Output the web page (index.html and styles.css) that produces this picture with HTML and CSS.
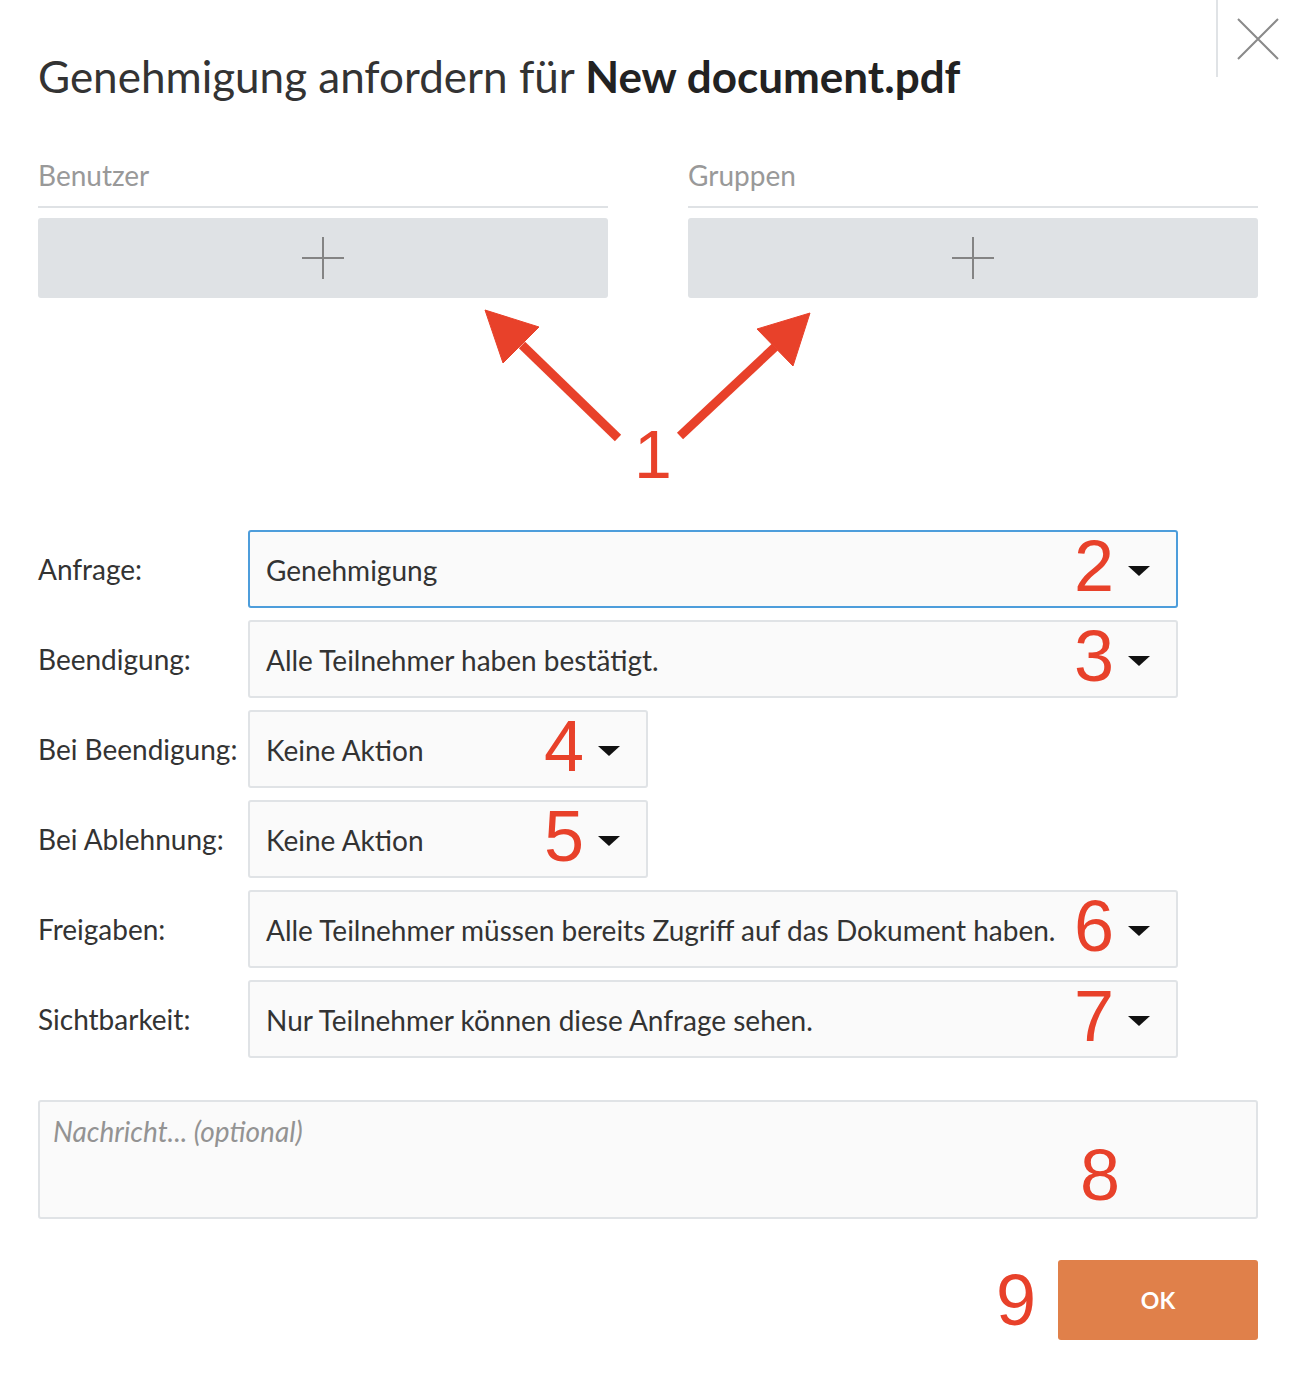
FILE: index.html
```html
<!DOCTYPE html>
<html lang="de">
<head>
  <meta charset="UTF-8">
  <meta name="viewport" content="width=device-width, initial-scale=1.0">
  <title>Genehmigung anfordern</title>
  <link rel="stylesheet" href="styles.css">
</head>
<body>

  <div class="dialog">
    <div class="header">
      <h1>Genehmigung anfordern für <b>New document.pdf</b></h1>
      <button class="close" title="Schließen">
        <svg width="44" height="44" viewBox="0 0 44 44"><path d="M2 2L42 42M42 2L2 42" stroke="#8a8a8a" stroke-width="2" fill="none"/></svg>
      </button>
    </div>

    <div class="body">
      <div class="pickers">
        <div class="picker">
          <div class="picker-title">Benutzer</div>
          <button class="add-btn"><span class="plus"></span></button>
        </div>
        <div class="picker">
          <div class="picker-title">Gruppen</div>
          <button class="add-btn"><span class="plus"></span></button>
        </div>
      </div>

      <!-- callout arrows pointing at both add buttons -->
      <div class="callout">
        <svg class="arrows" viewBox="38 298 1220 232" width="1220" height="232">
          <g fill="#e8412a" stroke="#e8412a">
            <line x1="522" y1="345" x2="618" y2="438" stroke-width="9"/>
            <polygon points="485,310 539,327 503,363" stroke-width="1"/>
            <line x1="775" y1="347" x2="680" y2="436" stroke-width="9"/>
            <polygon points="810,313 757,329 793,366" stroke-width="1"/>
          </g>
        </svg>
        <span class="mark mark-one">1</span>
      </div>

      <div class="form">
        <div class="row">
          <label>Anfrage:</label>
          <div class="select wide focused"><span class="value">Genehmigung</span><span class="mark">2</span><span class="caret"></span></div>
        </div>
        <div class="row">
          <label>Beendigung:</label>
          <div class="select wide"><span class="value">Alle Teilnehmer haben bestätigt.</span><span class="mark">3</span><span class="caret"></span></div>
        </div>
        <div class="row">
          <label>Bei Beendigung:</label>
          <div class="select narrow"><span class="value">Keine Aktion</span><span class="mark">4</span><span class="caret"></span></div>
        </div>
        <div class="row">
          <label>Bei Ablehnung:</label>
          <div class="select narrow"><span class="value">Keine Aktion</span><span class="mark">5</span><span class="caret"></span></div>
        </div>
        <div class="row">
          <label>Freigaben:</label>
          <div class="select wide"><span class="value">Alle Teilnehmer müssen bereits Zugriff auf das Dokument haben.</span><span class="mark">6</span><span class="caret"></span></div>
        </div>
        <div class="row">
          <label>Sichtbarkeit:</label>
          <div class="select wide"><span class="value">Nur Teilnehmer können diese Anfrage sehen.</span><span class="mark">7</span><span class="caret"></span></div>
        </div>
      </div>

      <div class="message">
        <div class="placeholder">Nachricht... (optional)</div>
        <span class="mark mark-eight">8</span>
      </div>

      <div class="footer">
        <span class="mark">9</span>
        <button class="ok">OK</button>
      </div>
    </div>
  </div>

</body>
</html>
```

FILE: styles.css
```css
body {
  margin: 0;
  background: #fff;
  font-family: 'Lato', 'Noto Sans', sans-serif;
  color: #333;
}

.dialog {
  width: 1294px;
}

.header {
  display: flex;
  justify-content: space-between;
  align-items: flex-start;
  padding-left: 38px;
}

h1 {
  margin: 48px 0 0;
  font-size: 44px;
  font-weight: 400;
  line-height: 56px;
  color: #333;
}

h1 b {
  font-weight: 700;
  color: #222;
}

.close {
  width: 78px;
  height: 77px;
  padding: 0;
  border: none;
  border-left: 2px solid #e0e3e6;
  background: none;
  display: flex;
  align-items: center;
  justify-content: center;
  cursor: pointer;
}

.close svg {
  margin-left: 4px;
}

.body {
  padding: 0 36px 0 38px;
}

.pickers {
  display: flex;
  gap: 80px;
  margin-top: 54px;
}

.picker {
  flex: 1;
}

.picker-title {
  font-size: 28px;
  color: #999;
  line-height: 34px;
  padding-bottom: 14px;
  border-bottom: 2px solid #dfe2e5;
}

.add-btn {
  display: flex;
  align-items: center;
  justify-content: center;
  width: 100%;
  height: 80px;
  margin-top: 10px;
  border: none;
  border-radius: 3px;
  background: #dfe2e5;
  cursor: pointer;
}

.plus {
  position: relative;
  width: 42px;
  height: 42px;
}

.plus::before,
.plus::after {
  content: "";
  position: absolute;
  background: #848484;
}

.plus::before {
  left: 0;
  right: 0;
  top: 20px;
  height: 2px;
}

.plus::after {
  top: 0;
  bottom: 0;
  left: 20px;
  width: 2px;
}

/* red annotation numbers */
.mark {
  font-family: 'Liberation Sans', Arial, sans-serif;
  font-size: 72px;
  line-height: 72px;
  color: #e8412a;
}

.callout {
  position: relative;
  height: 232px;
}

.arrows {
  display: block;
}

.mark-one {
  position: absolute;
  left: 596px;
  top: 120px;
  font-size: 68px;
}

.form {
  display: flex;
  flex-direction: column;
  gap: 12px;
}

.row {
  display: flex;
  align-items: center;
}

.row label {
  width: 210px;
  flex-shrink: 0;
  font-size: 28px;
  color: #333;
}

.select {
  box-sizing: border-box;
  height: 78px;
  display: flex;
  align-items: center;
  padding: 0 26px 0 16px;
  background: #fafafa;
  border: 2px solid #e0e3e6;
  border-radius: 3px;
  font-size: 28px;
  color: #333;
}

.select.focused {
  border-color: #4d9ddb;
}

.select.wide {
  width: 930px;
}

.select.narrow {
  width: 400px;
}

.select .value {
  flex: 1;
  white-space: nowrap;
  padding-top: 2px;
}

.select .mark {
  margin-right: 14px;
  margin-top: -6px;
}

.caret {
  width: 0;
  height: 0;
  border-left: 11px solid transparent;
  border-right: 11px solid transparent;
  border-top: 10px solid #111;
  margin-top: 4px;
}

.message {
  box-sizing: border-box;
  position: relative;
  height: 119px;
  margin-top: 42px;
  padding: 12px 13px;
  background: #fafafa;
  border: 2px solid #e0e3e6;
  border-radius: 3px;
}

.placeholder {
  font-size: 28px;
  font-style: italic;
  color: #939393;
}

.mark-eight {
  position: absolute;
  left: 1040px;
  top: 37px;
}

.footer {
  display: flex;
  justify-content: flex-end;
  align-items: center;
  gap: 22px;
  margin-top: 41px;
}

.ok {
  width: 200px;
  height: 80px;
  border: none;
  border-radius: 3px;
  background: #e0804a;
  color: #fff;
  font-family: 'Lato', sans-serif;
  font-size: 23px;
  font-weight: 700;
  cursor: pointer;
}
```
